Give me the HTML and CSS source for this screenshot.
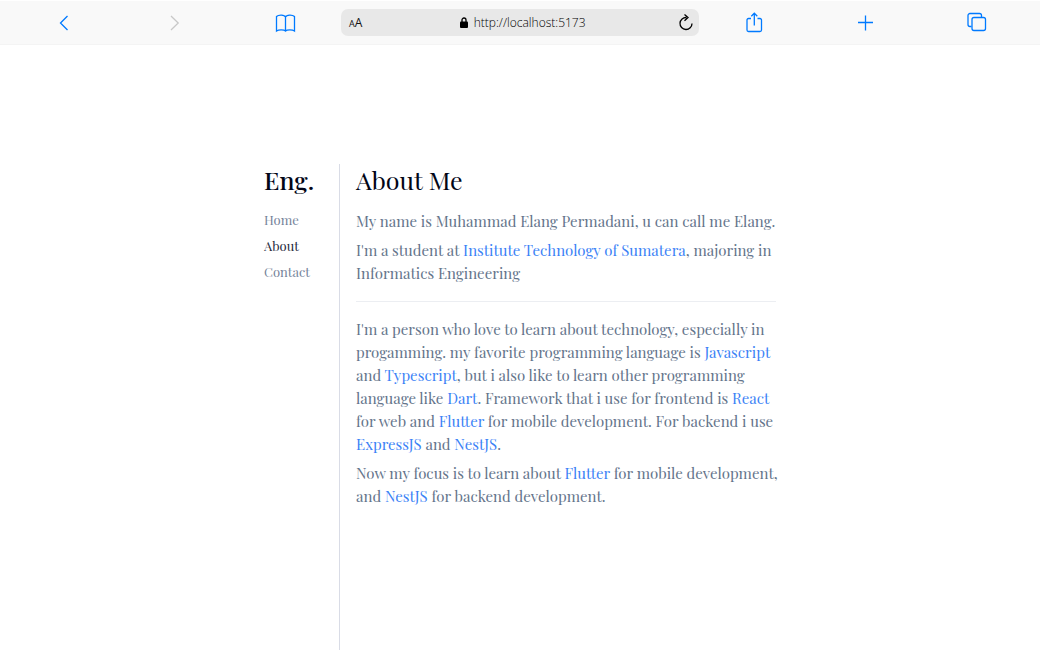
FILE: index.html
```html
<!DOCTYPE html>
<html lang="en">
<head>
<meta charset="utf-8">
<meta name="viewport" content="width=device-width, initial-scale=1">
<title>Eng. - About Me</title>
<link rel="stylesheet" href="styles.css">
</head>
<body>
<header class="toolbar">
  <button class="tool" type="button" aria-label="Back"><svg width="24" height="24" viewBox="0 0 24 24"><path d="M15.500 5L8.500 12l7 7"/></svg></button>
  <button class="tool" type="button" aria-label="Forward" disabled><svg width="24" height="24" viewBox="0 0 24 24"><path d="M8 5l7.200 7L8 19"/></svg></button>
  <button class="tool" type="button" aria-label="Bookmarks"><svg width="24" height="24" viewBox="0 0 24 24"><path d="M11.500 6C10.500 3.500 4.500 3.500 2.500 5.500v14.500c2-1.600 7.500-1.600 9 0 1.500-1.600 7-1.600 9 0V5.500C18.500 3.500 12.500 3.500 11.500 6v14"/></svg></button>
  <div class="address">
    <button class="address-button" type="button" aria-label="Text size"><span class="small-a">A</span><span>A</span></button>
    <label class="location">
      <svg width="8" height="11" viewBox="0 0 8 11" aria-hidden="true"><path d="M2 5V3a2 2 0 0 1 4 0v2"/><rect class="lock-body" y="4.500" width="8" height="6.500" rx="1"/></svg>
      <input class="url" type="text" value="http://localhost:5173" size="18" aria-label="Address">
    </label>
    <button class="address-button" type="button" aria-label="Reload"><svg class="reload" width="16" height="20" viewBox="0 0 16 20"><path d="M8.500 4.500A6 6 0 1 0 14 10.500M6.500 1.500l3.500 3-3.500 3.200"/></svg></button>
  </div>
  <button class="tool" type="button" aria-label="Share"><svg width="24" height="24" viewBox="0 0 24 24"><path d="M8 7.500H5.500a1.500 1.500 0 0 0-1.500 1.500V19a1.500 1.500 0 0 0 1.500 1.500h11.500a1.500 1.500 0 0 0 1.500-1.500V9a1.500 1.500 0 0 0-1.500-1.500H14.500M11.300 14.500V2.500M8.300 5.200l3-3 3 3"/></svg></button>
  <button class="tool" type="button" aria-label="New tab"><svg width="24" height="24" viewBox="0 0 24 24"><path d="M11.500 4.500v15M4 11.500h15"/></svg></button>
  <button class="tool" type="button" aria-label="Tabs"><svg width="24" height="24" viewBox="0 0 24 24"><path d="M6.500 15.500h-1.500a2 2 0 0 1-2-2V4.500a2 2 0 0 1 2-2h9.500a2 2 0 0 1 2 2v1.500"/><rect x="7" y="6.500" width="13.500" height="13" rx="2"/></svg></button>
</header>
<div class="page">
  <aside class="sidebar">
    <h2 class="brand">Eng.</h2>
    <nav class="nav">
      <a href="#home">Home</a>
      <a class="active" href="#about" aria-current="page">About</a>
      <a href="#contact">Contact</a>
    </nav>
  </aside>
  <main class="content">
    <h1 class="title">About Me</h1>
    <section class="text">
      <p>My name is Muhammad Elang Permadani, u can call me Elang.</p>
      <p>I'm a student at <a href="#itera">Institute Technology of Sumatera</a>, majoring in<br>Informatics Engineering</p>
    </section>
    <hr class="rule">
    <section class="text">
      <p>I'm a person who love to learn about technology, especially in<br>
      progamming. my favorite programming language is <a href="#javascript">Javascript</a><br>
      and <a href="#typescript">Typescript</a>, but i also like to learn other programming<br>
      language like <a href="#dart">Dart</a>. Framework that i use for frontend is <a href="#react">React</a><br>
      for web and <a href="#flutter">Flutter</a> for mobile development. For backend i use<br>
      <a href="#expressjs">ExpressJS</a> and <a href="#nestjs">NestJS</a>.</p>
      <p>Now my focus is to learn about <a href="#flutter">Flutter</a> for mobile development,<br>
      and <a href="#nestjs">NestJS</a> for backend development.</p>
    </section>
  </main>
</div>
</body>
</html>
```
FILE: styles.css
```css
* {
  box-sizing: border-box;
}

body {
  margin: 0;
  min-height: 100vh;
  display: flex;
  flex-direction: column;
  background: #fff;
  font-family: "Playfair Display", "Liberation Serif", serif;
}

h1, h2, p {
  margin: 0;
}

a {
  text-decoration: none;
}

.toolbar {
  display: grid;
  grid-template-columns: repeat(3, 1fr) 358px repeat(3, 1fr);
  align-items: center;
  height: 45px;
  padding: 0 8px;
  background: #f9f9f9;
  border-top: 1px solid #fff;
  border-bottom: 1px solid #f4f4f4;
}

.tool {
  display: flex;
  justify-self: center;
  padding: 0;
  border: 0;
  background: none;
  color: #007aff;
}

.tool:disabled {
  color: #c8c8c8;
}

svg {
  fill: none;
  stroke: currentColor;
  stroke-width: 1.3;
}

.address {
  display: flex;
  align-items: center;
  justify-content: space-between;
  height: 27px;
  padding: 0 5px 0 8px;
  border-radius: 7px;
  background: #e8e8e8;
}

.address-button {
  display: flex;
  align-items: baseline;
  padding: 0;
  border: 0;
  background: none;
  color: #111;
  font: 12px "Open Sans", sans-serif;
}

.small-a {
  font-size: 9px;
}

.location {
  display: flex;
  align-items: center;
  gap: 6px;
  padding-left: 5px;
  color: #000;
}

.url {
  field-sizing: content;
  padding: 0;
  border: 0;
  background: none;
  color: #000;
  font: 300 12px "Open Sans", sans-serif;
}

.lock-body {
  fill: #000;
  stroke: none;
}

.reload {
  color: #000;
}

.page {
  flex: 1;
  display: flex;
  width: 100%;
  max-width: 512px;
  margin: 0 auto;
  padding-top: 119px;
}

.sidebar {
  flex: 0 0 76px;
  border-right: 1px solid #d9dce6;
}

.brand, .title {
  color: #020617;
  font-size: 25px;
  line-height: 32px;
}

.brand {
  font-weight: 500;
}

.title {
  font-weight: 400;
}

.nav {
  display: flex;
  flex-direction: column;
  margin-top: 11px;
  font-size: 13px;
  line-height: 26px;
}

.nav a {
  color: #75839a;
}

.nav .active {
  color: #1e293b;
}

.content {
  flex: 1;
  min-width: 0;
  padding-left: 16px;
}

.text {
  display: grid;
  gap: 6px;
  color: #64748b;
  font-size: 15px;
  line-height: 23px;
  white-space: nowrap;
}

.title + .text {
  margin-top: 14px;
}

.text a {
  color: #3b82f6;
}

.rule {
  margin: 16px 0;
  border: 0;
  border-top: 1px solid #eceef2;
}
```
